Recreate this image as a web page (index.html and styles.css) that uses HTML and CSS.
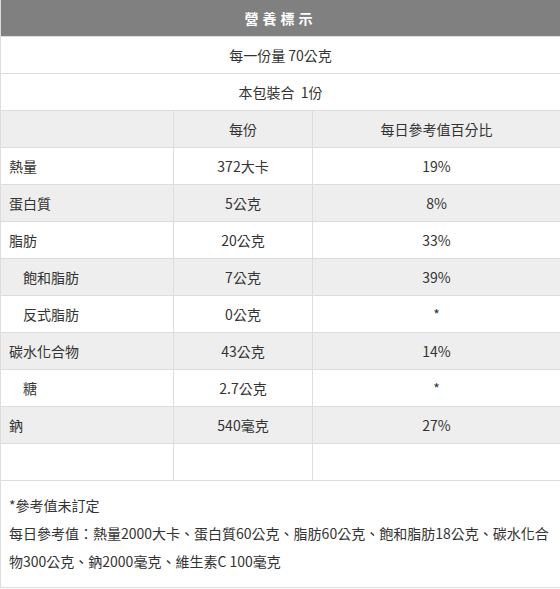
FILE: index.html
```html
<!DOCTYPE html>
<html lang="zh-Hant">
<head>
<meta charset="utf-8">
<title>營養標示</title>
<link rel="stylesheet" href="styles.css">
</head>
<body>
<table class="nutrition">
  <colgroup>
    <col class="c-name">
    <col class="c-per">
    <col class="c-pct">
  </colgroup>
  <tr class="title-row"><th colspan="3" class="title">營養標示</th></tr>
  <tr><td colspan="3" class="center">每一份量 70公克</td></tr>
  <tr><td colspan="3" class="center">本包裝合&nbsp; 1份</td></tr>
  <tr class="alt"><td></td><td class="center">每份</td><td class="center">每日參考值百分比</td></tr>
  <tr><td>熱量</td><td class="center">372大卡</td><td class="center">19%</td></tr>
  <tr class="alt"><td>蛋白質</td><td class="center">5公克</td><td class="center">8%</td></tr>
  <tr><td>脂肪</td><td class="center">20公克</td><td class="center">33%</td></tr>
  <tr class="alt"><td class="sub">飽和脂肪</td><td class="center">7公克</td><td class="center">39%</td></tr>
  <tr><td class="sub">反式脂肪</td><td class="center">0公克</td><td class="center">*</td></tr>
  <tr class="alt"><td>碳水化合物</td><td class="center">43公克</td><td class="center">14%</td></tr>
  <tr><td class="sub">糖</td><td class="center">2.7公克</td><td class="center">*</td></tr>
  <tr class="alt"><td>鈉</td><td class="center">540毫克</td><td class="center">27%</td></tr>
  <tr><td></td><td></td><td></td></tr>
  <tr><td colspan="3" class="notes">*參考值未訂定<br>每日參考值：熱量2000大卡、蛋白質60公克、脂肪60公克、飽和脂肪18公克、碳水化合<br>物300公克、鈉2000毫克、維生素C 100毫克</td></tr>
</table>
</body>
</html>
```

FILE: styles.css
```css
html, body {
  margin: 0;
  padding: 0;
  background: #ffffff;
}

body {
  font-family: "Noto Sans CJK TC", "Noto Sans", sans-serif;
  font-size: 14px;
  color: #333333;
}

.nutrition {
  width: 100%;
  border-collapse: collapse;
  table-layout: fixed;
}

.c-name { width: 173px; }
.c-per { width: 139px; }

.nutrition td,
.nutrition th {
  border: 1px solid #dddddd;
  height: 37px;
  padding: 0 8px;
  line-height: 20px;
  text-align: left;
  vertical-align: middle;
  box-sizing: border-box;
}

.nutrition td:last-child,
.nutrition th:last-child {
  border-right: 0;
}

.title-row .title {
  background: #808080;
  color: #ffffff;
  font-weight: bold;
  text-align: center;
  letter-spacing: 4px;
  border-top: 0;
  height: 36px;
}

.nutrition td.center {
  text-align: center;
}

.nutrition td.sub {
  padding-left: 22px;
}

.alt td {
  background: #eeeeee;
}

.nutrition td.notes {
  height: auto;
  padding: 10px 8px 12px 8px;
  line-height: 28px;
}
```
